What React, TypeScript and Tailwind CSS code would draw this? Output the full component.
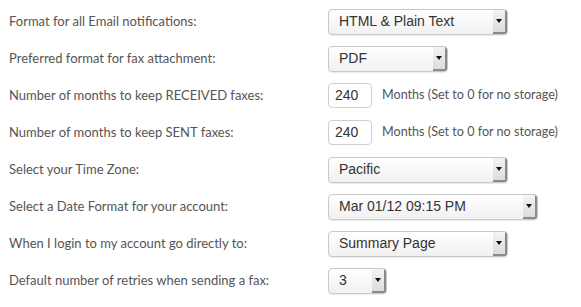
const Select = ({ value, width }: { value: string; width: string }) => {
  return (
    <div
      className={`${width} h-[26px] flex items-center justify-between rounded-[4px] border border-[#c8c8c8] bg-gradient-to-b from-white to-[#f1f1f1] shadow-[0_1px_1px_rgba(0,0,0,0.08)] overflow-hidden`}
    >
      <span className="pl-[10px] text-[14px] text-[#333] font-['Liberation_Sans',Arial,sans-serif] whitespace-nowrap">
        {value}
      </span>
      <span className="h-full w-[14px] flex items-center justify-center bg-gradient-to-b from-[#f4f4f4] to-[#dcdcdc] border-r-2 border-b-2 border-[#8a8a8a]">
        <svg width="6" height="4" viewBox="0 0 6 4">
          <path d="M0 0 H6 L3 4 Z" fill="#111" />
        </svg>
      </span>
    </div>
  );
};

const Months = () => {
  return (
    <div className="flex items-center gap-[10px]">
      <div className="w-[44px] h-[25px] flex items-center rounded-[4px] border border-[#cfcfcf] bg-white pl-[6px] text-[14px] text-[#333] font-['Liberation_Sans',Arial,sans-serif]">
        240
      </div>
      <span className="text-[12.6px] text-[#555]">Months (Set to 0 for no storage)</span>
    </div>
  );
};

const rows = [
  { label: "Format for all Email notifications:", control: <Select value="HTML & Plain Text" width="w-[180px]" /> },
  { label: "Preferred format for fax attachment:", control: <Select value="PDF" width="w-[120px]" /> },
  { label: "Number of months to keep RECEIVED faxes:", control: <Months /> },
  { label: "Number of months to keep SENT faxes:", control: <Months /> },
  { label: "Select your Time Zone:", control: <Select value="Pacific" width="w-[180px]" /> },
  { label: "Select a Date Format for your account:", control: <Select value="Mar 01/12 09:15 PM" width="w-[210px]" /> },
  { label: "When I login to my account go directly to:", control: <Select value="Summary Page" width="w-[180px]" /> },
  { label: "Default number of retries when sending a fax:", control: <Select value="3" width="w-[59px]" /> },
];

export default function App() {
  return (
    <div className="w-[581px] h-[307px] bg-white pt-[3px] pl-[9px] font-['Lato',sans-serif]">
      {rows.map((row) => (
        <div key={row.label} className="h-[37px] flex items-center">
          <div className="w-[319px] text-[13px] text-[#555]">{row.label}</div>
          {row.control}
        </div>
      ))}
    </div>
  );
}
